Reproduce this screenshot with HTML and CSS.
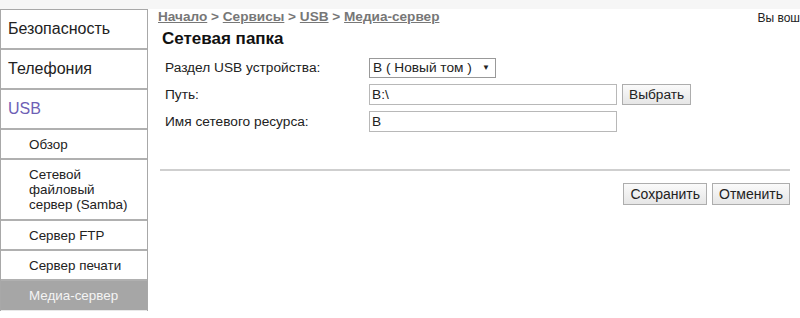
FILE: index.html
```html
<!DOCTYPE html>
<html lang="ru">
<head>
  <meta charset="utf-8">
  <title>Медиа-сервер</title>
  <link rel="stylesheet" href="styles.css">
</head>
<body>

    <div class="topbar"></div>

    <div class="page">
        <div class="sidebar">
            <div class="menu-item">Безопасность</div>
            <div class="menu-item">Телефония</div>
            <div class="menu-item active">USB</div>
            <div class="sub-item">Обзор</div>
            <div class="sub-item tall">Сетевой<br>файловый<br>сервер (Samba)</div>
            <div class="sub-item">Сервер FTP</div>
            <div class="sub-item">Сервер печати</div>
            <div class="sub-item selected">Медиа-сервер</div>
        </div>

        <div class="main">
            <div class="head-row">
                <div class="crumbs">
                    <a href="#">Начало</a> &gt; <a href="#">Сервисы</a> &gt; <a href="#">USB</a> &gt; <a href="#">Медиа-сервер</a>
                </div>
                <div class="user">Вы вош</div>
            </div>

            <div class="title">Сетевая папка</div>

            <div class="form">
                <div class="label">Раздел USB устройства:</div>
                <div class="field">
                    <div class="select">B ( Новый том ) <span class="arrow">&#9660;</span></div>
                </div>

                <div class="label">Путь:</div>
                <div class="field">
                    <input type="text" class="text" value="B:\">
                    <button class="btn">Выбрать</button>
                </div>

                <div class="label">Имя сетевого ресурса:</div>
                <div class="field">
                    <input type="text" class="text" value="B">
                </div>
            </div>

            <div class="line"></div>

            <div class="actions">
                <button class="btn big">Сохранить</button>
                <button class="btn big">Отменить</button>
            </div>
        </div>
    </div>

</body>
</html>
```

FILE: styles.css
```css
html, body {
    margin: 0;
    padding: 0;
    overflow: hidden;
}

body {
    background: #fff;
    font-family: "Liberation Sans", Arial, sans-serif;
    font-size: 13.7px;
    color: #222;
}

.topbar {
    height: 9px;
    background: #f6f6f6;
}

.page {
    display: flex;
}

.sidebar {
    width: 146px;
    flex-shrink: 0;
    border-left: 1px solid #a8a8a8;
    border-right: 1px solid #a8a8a8;
    border-top: 1px solid #a8a8a8;
}

.menu-item {
    font-size: 16px;
    line-height: 18px;
    padding: 10px 0 10px 7px;
    border-bottom: 2px solid #b0b0b0;
    color: #222;
}

.menu-item.active {
    color: #6e5fb5;
}

.sub-item {
    font-size: 13.4px;
    line-height: 15px;
    padding: 7px 0 6px 28px;
    border-bottom: 2px solid #b0b0b0;
    color: #222;
}

.sub-item.tall {
    padding-bottom: 7px;
}

.sub-item.selected {
    background: #a6a6a6;
    color: #f4f4f4;
    padding-bottom: 7px;
    border-bottom: 1px solid #e8e8e8;
}

.main {
    flex: 1;
    padding: 0 10px;
    min-width: 0;
}

.head-row {
    display: flex;
    justify-content: space-between;
    line-height: 15px;
}

.crumbs {
    font-size: 13.6px;
    font-weight: bold;
    color: #777;
}

.crumbs a {
    color: #777;
    text-decoration: underline;
}

.user {
    font-size: 12px;
    color: #222;
    white-space: nowrap;
    margin-right: -10px;
    padding-top: 2px;
}

.title {
    font-size: 17px;
    font-weight: bold;
    color: #111;
    margin: 3px 0 0 4px;
    line-height: 19px;
}

.form {
    display: grid;
    grid-template-columns: 204px auto;
    row-gap: 6px;
    margin: 9px 0 0 7px;
}

.label {
    line-height: 21px;
}

.field {
    display: flex;
    gap: 5px;
    align-items: center;
}

.select {
    width: 122px;
    height: 18px;
    border: 1px solid #999;
    line-height: 18px;
    padding-left: 3px;
    color: #222;
    position: relative;
}

.arrow {
    font-size: 8px;
    position: absolute;
    right: 5px;
    top: 0;
}

.text {
    width: 248px;
    height: 21px;
    box-sizing: border-box;
    border: 1px solid #b8b8b8;
    font-family: "Liberation Sans", Arial, sans-serif;
    font-size: 13.7px;
    padding: 0 2px;
    color: #222;
    margin: 0;
}

.btn {
    height: 21px;
    font-family: "Liberation Sans", Arial, sans-serif;
    font-size: 13.7px;
    color: #222;
    background: linear-gradient(#fafafa, #e6e6e6);
    border: 1px solid #adadad;
    padding: 0 6px;
    margin: 0;
}

.line {
    height: 2px;
    background: #cfcfcf;
    margin: 37px 0 0 2px;
}

.actions {
    display: flex;
    justify-content: flex-end;
    gap: 5px;
    margin-top: 12px;
}

.btn.big {
    height: 22px;
    font-size: 14px;
    padding: 0 6px;
}
```
